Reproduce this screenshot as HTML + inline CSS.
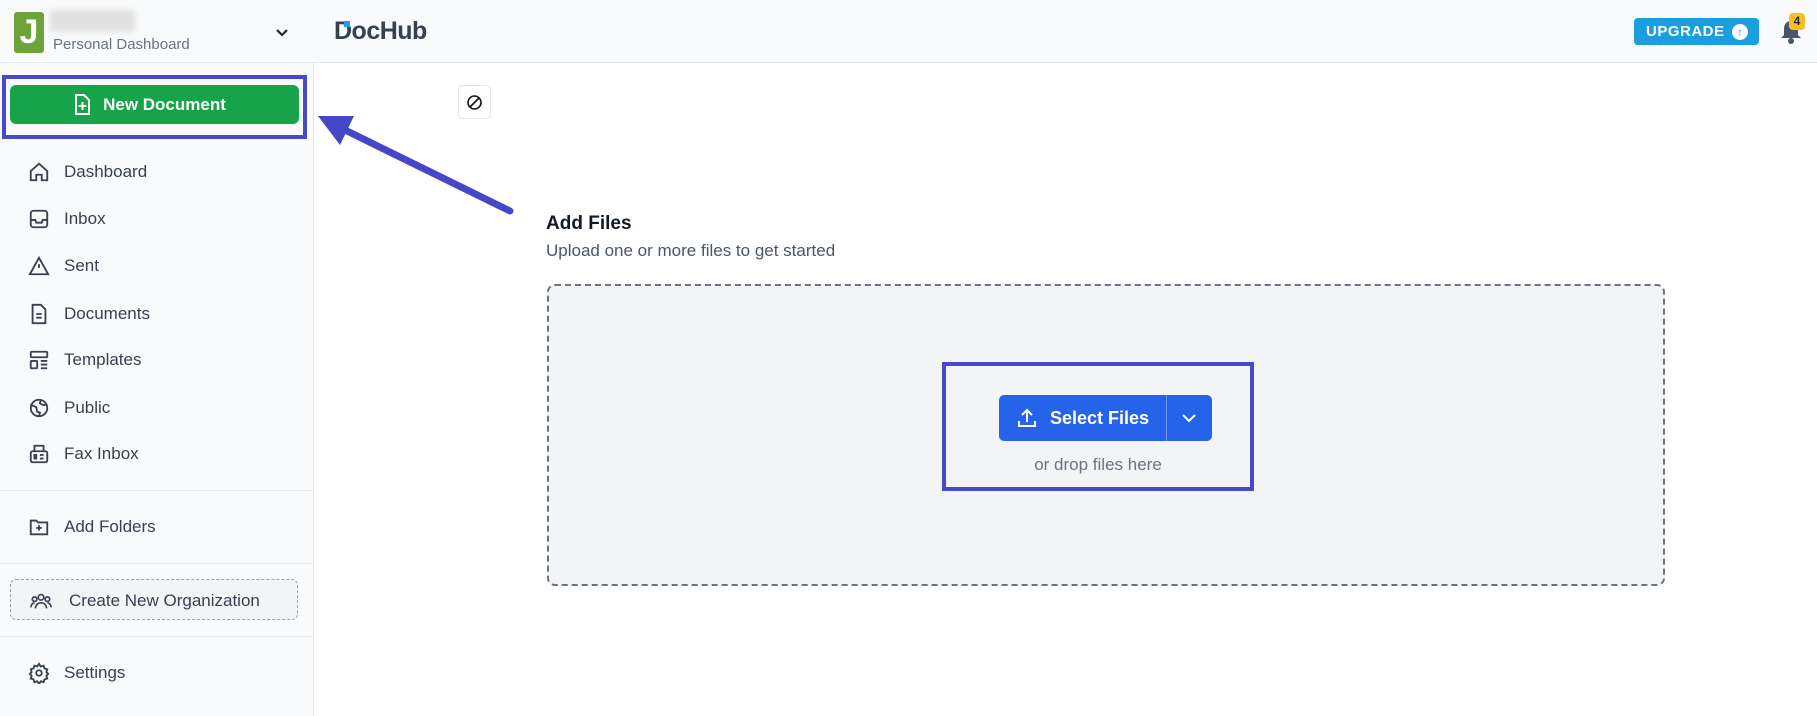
<!DOCTYPE html>
<html><head><meta charset="utf-8"><style>
*{box-sizing:border-box;margin:0;padding:0}
body{width:1817px;height:716px;overflow:hidden;background:#fff;font-family:"Liberation Sans",sans-serif;color:#1f2937;position:relative}
.hdr{position:absolute;left:0;top:0;width:1817px;height:63px;background:#f9fafb;border-bottom:1px solid #e5e7eb}
.side{position:absolute;left:0;top:63px;width:314px;height:653px;background:#f9fafb;border-right:1px solid #e5e7eb}
.nav{position:absolute;left:28px;font-size:17px;color:#374151;display:flex;align-items:center}
.nav svg{width:22px;height:22px;margin-right:14px}
.hr{position:absolute;left:0;width:314px;height:1px;background:#e5e7eb}
.abs{position:absolute}
</style></head><body>
<div class="hdr"></div>
<div class="abs" style="left:14px;top:12px;width:30px;height:41px;background:#6ea33a;border-radius:3px;color:#fff;font-weight:bold;font-size:34px;line-height:41px;text-align:center">J</div>
<div class="abs" style="left:50px;top:10px;width:85px;height:22px;background:#e0e0e0;border-radius:4px;filter:blur(3px)"></div>
<div class="abs" style="left:53px;top:36px;font-size:15px;color:#6b7280">Personal Dashboard</div>
<svg class="abs" style="left:274px;top:24px" width="16" height="16" viewBox="0 0 16 16"><path d="M3 6l5 5 5-5" stroke="#1f2937" stroke-width="2.2" fill="none"/></svg>
<div class="abs" style="left:334px;top:17px;font-size:25px;font-weight:bold;color:#374151;letter-spacing:-0.5px">DocHub</div>
<div class="abs" style="left:344px;top:21px;width:6px;height:6px;background:#1ea0e6"></div>
<div class="abs" style="left:1634px;top:18px;width:125px;height:27px;background:#1a9ee0;border-radius:4px;color:#fff;font-weight:bold;font-size:15px;line-height:27px;padding-left:12px;letter-spacing:.5px">UPGRADE</div>
<div class="abs" style="left:1732px;top:24px;width:16px;height:16px;background:#fff;border-radius:50%;color:#1a9ee0;font-size:12px;font-weight:bold;text-align:center;line-height:16px">↑</div>
<svg class="abs" style="left:1778px;top:18px" width="26" height="28" viewBox="0 0 26 28"><path d="M13 3c-5 0-7 4-7 8v6l-3 3h20l-3-3v-6c0-4-2-8-7-8z" fill="#4b5563"/><circle cx="13" cy="23" r="3" fill="#4b5563"/></svg>
<div class="abs" style="left:1789px;top:13px;width:16px;height:17px;background:#fbbf24;border-radius:4px;font-size:12px;font-weight:bold;text-align:center;line-height:17px">4</div>

<div class="side"></div>
<div class="abs" style="left:2px;top:75px;width:305px;height:64px;border:4px solid #4848cc"></div>
<div class="abs" style="left:10px;top:85px;width:289px;height:39px;background:#16a34a;border-radius:6px;color:#fff;font-weight:bold;font-size:17px;line-height:39px;text-align:center;padding-left:20px">New Document</div>
<svg class="abs" style="left:73px;top:94px" width="18" height="22" viewBox="0 0 18 22"><path d="M3 1h8l5 5v14H3z" fill="none" stroke="#fff" stroke-width="2"/><path d="M9.5 8v8M5.5 12h8" stroke="#fff" stroke-width="2"/></svg>

<div class="nav" style="top:161px"><svg viewBox="0 0 24 24" fill="none" stroke="#374151" stroke-width="2"><path d="M3 11l9-8 9 8v10H15v-6H9v6H3z"/></svg>Dashboard</div>
<div class="nav" style="top:208px"><svg viewBox="0 0 24 24" fill="none" stroke="#374151" stroke-width="2"><rect x="3" y="3" width="18" height="18" rx="3"/><path d="M3 13h5l1 3h6l1-3h5"/></svg>Inbox</div>
<div class="nav" style="top:255px"><svg viewBox="0 0 24 24" fill="none" stroke="#374151" stroke-width="2"><path d="M12 3L2 21h20z M12 10v4"/></svg>Sent</div>
<div class="nav" style="top:303px"><svg viewBox="0 0 24 24" fill="none" stroke="#374151" stroke-width="2"><path d="M5 2h9l5 5v15H5z M9 12h6M9 16h6"/></svg>Documents</div>
<div class="nav" style="top:349px"><svg viewBox="0 0 24 24" fill="none" stroke="#374151" stroke-width="2"><rect x="3" y="3" width="18" height="6" rx="1"/><rect x="3" y="13" width="7" height="8" rx="1"/><path d="M14 13h7M14 17h7M14 21h7"/></svg>Templates</div>
<div class="nav" style="top:397px"><svg viewBox="0 0 24 24" fill="none" stroke="#374151" stroke-width="2"><circle cx="12" cy="12" r="9"/><path d="M4 9l5 2 1 5 3 1-1 4M14 3l-1 4 4 2 3-1"/></svg>Public</div>
<div class="nav" style="top:443px"><svg viewBox="0 0 24 24" fill="none" stroke="#374151" stroke-width="2"><rect x="3" y="9" width="18" height="12" rx="2"/><path d="M7 9V3h10v6M13 13h4M13 17h4M7 13h2v4H7z"/></svg>Fax Inbox</div>
<div class="hr" style="top:490px"></div>
<div class="nav" style="top:516px"><svg viewBox="0 0 24 24" fill="none" stroke="#374151" stroke-width="2"><path d="M3 5h6l2 2h10v13H3z M12 10v6M9 13h6"/></svg>Add Folders</div>
<div class="hr" style="top:563px"></div>
<div class="abs" style="left:10px;top:579px;width:288px;height:41px;border:1px dashed #9ca3af;border-radius:6px;background:#f3f4f6"></div>
<div class="nav" style="top:590px;left:27px"><svg viewBox="0 0 24 24" fill="none" stroke="#374151" stroke-width="1.8" style="width:28px;margin-right:14px"><circle cx="12" cy="8" r="3"/><circle cx="5" cy="10" r="2.5"/><circle cx="19" cy="10" r="2.5"/><path d="M6 20c0-4 3-6 6-6s6 2 6 6M1 19c0-3 2-5 4-5M23 19c0-3-2-5-4-5"/></svg>Create New Organization</div>
<div class="hr" style="top:636px"></div>
<div class="nav" style="top:662px"><svg viewBox="0 0 24 24" fill="none" stroke="#374151" stroke-width="2"><circle cx="12" cy="12" r="3"/><path d="M12 2l2 3 3-1 1 3 3 1-1 3 2 2-2 2 1 3-3 1-1 3-3-1-2 3-2-3-3 1-1-3-3-1 1-3-2-2 2-2-1-3 3-1 1-3 3 1z"/></svg>Settings</div>

<div class="abs" style="left:458px;top:85px;width:33px;height:34px;border:1px solid #e5e7eb;border-radius:4px;background:#fff"></div>
<svg class="abs" style="left:466px;top:94px" width="17" height="17" viewBox="0 0 17 17"><circle cx="8.5" cy="8.5" r="6.5" fill="none" stroke="#111" stroke-width="1.6"/><path d="M4 13L13 4" stroke="#111" stroke-width="1.6"/></svg>

<svg class="abs" style="left:0;top:0" width="1817" height="716"><path d="M510 211L345 130" stroke="#4646c8" stroke-width="7" stroke-linecap="round"/><path d="M318 116L354 116L340 145z" fill="#4646c8"/></svg>

<div class="abs" style="left:546px;top:213px;font-size:19px;font-weight:bold;color:#111827">Add Files</div>
<div class="abs" style="left:546px;top:241px;font-size:17px;color:#4b5563">Upload one or more files to get started</div>
<div class="abs" style="left:547px;top:284px;width:1118px;height:302px;border:2px dashed #6b7280;border-radius:8px;background:#f3f4f6"></div>
<div class="abs" style="left:942px;top:362px;width:312px;height:129px;border:4px solid #4848cc"></div>
<div class="abs" style="left:999px;top:395px;width:213px;height:46px;background:#2563eb;border-radius:5px"></div>
<div class="abs" style="left:1166px;top:395px;width:1px;height:46px;background:#6b93f0"></div>
<svg class="abs" style="left:1016px;top:407px" width="22" height="22" viewBox="0 0 22 22"><path d="M11 15V3M6 8l5-5 5 5M3 14v5h16v-5" fill="none" stroke="#fff" stroke-width="2"/></svg>
<div class="abs" style="left:1050px;top:408px;font-size:18px;font-weight:bold;color:#fff">Select Files</div>
<svg class="abs" style="left:1180px;top:411px" width="18" height="14" viewBox="0 0 18 14"><path d="M3 4l6 6 6-6" fill="none" stroke="#fff" stroke-width="2"/></svg>
<div class="abs" style="left:942px;top:455px;width:312px;text-align:center;font-size:17px;color:#6b7280">or drop files here</div>
</body></html>
